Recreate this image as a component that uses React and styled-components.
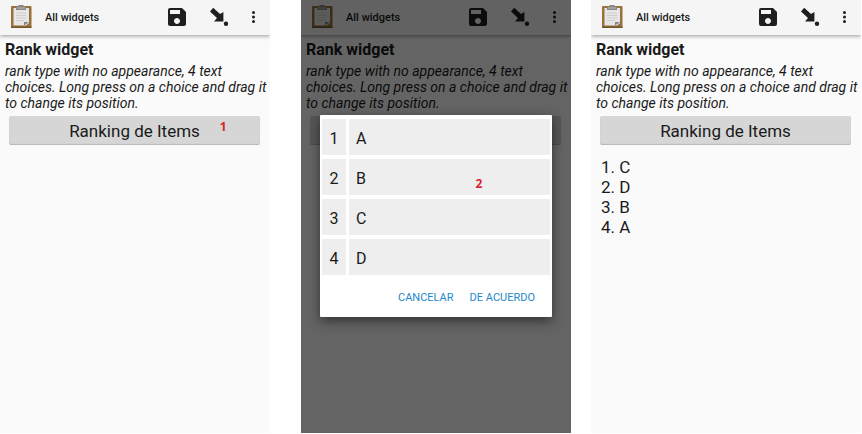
import React from "react";
import styled, { createGlobalStyle } from "styled-components";
import { MdSave } from "react-icons/md";

const GlobalStyle = createGlobalStyle`
  * { box-sizing: border-box; }
  body {
    margin: 0;
    background: #fff;
    color: #1a1a1a;
    font-family: Roboto, "Noto Sans", sans-serif;
  }
`;

const Page = styled.main`
  display: flex;
  min-height: 100vh;
  padding: 0 1px 1px 0;
`;

const Screen = styled.section`
  position: relative;
  flex: 1;
  min-width: 0;
  margin-left: ${({ $gap }) => $gap || 0}px;
  background: #fafafa;
`;

const Toolbar = styled.header`
  display: flex;
  align-items: center;
  height: 35px;
  padding: 0 4px 1px 8px;
  background: #f5f5f5;
  box-shadow: 0 1px 4px rgba(0, 0, 0, 0.4);
  clip-path: inset(0 0 -8px 0);
`;

const AppTitle = styled.h1`
  flex: 1;
  margin: 0 0 0 11px;
  padding-top: 2px;
  font-size: 11px;
  line-height: 16px;
  font-weight: 500;
`;

const IconButton = styled.button`
  display: grid;
  place-items: center;
  width: ${({ $width }) => $width}px;
  height: 34px;
  padding: 0;
  border: 0;
  background: none;
  color: #1f1f1f;
`;

const Content = styled.div`
  padding: 4px 0 4px 5px;
`;

const Question = styled.h2`
  margin: 0;
  font-size: 16px;
  line-height: 22px;
  font-weight: 700;
`;

const Hint = styled.p`
  margin: 2px 0 0;
  font-size: 14px;
  line-height: 16px;
  font-style: italic;
`;

const RankButton = styled.button`
  position: relative;
  display: block;
  width: calc(100% - 14px);
  height: 29px;
  margin: 5px 10px 0 4px;
  padding: 2px 0 0;
  border: 0;
  border-radius: 2px;
  background: #d6d6d6;
  box-shadow: inset 0 -1px 1px rgba(0, 0, 0, 0.15);
  color: #1a1a1a;
  font-family: inherit;
  font-size: 17px;
  line-height: 27px;
`;

const Marker = styled.span`
  position: absolute;
  top: ${({ $top }) => $top};
  left: ${({ $left }) => $left};
  color: #d9262c;
  font-family: "Open Sans", sans-serif;
  font-size: 12px;
  line-height: 16px;
  font-weight: 700;
`;

const Answers = styled.ol`
  margin: 12px 0 0 5px;
  padding: 0;
  list-style: none;
  font-size: 17px;
  line-height: 20px;
`;

const Scrim = styled.div`
  position: absolute;
  inset: 0;
  display: flex;
  align-items: center;
  padding: 0 19px 2px;
  background: rgba(0, 0, 0, 0.6);
`;

const Dialog = styled.div`
  position: relative;
  flex: 1;
  padding: 4px 2px;
  border-radius: 1px;
  background: #fff;
  box-shadow: 0 4px 12px rgba(0, 0, 0, 0.5);
`;

const Choices = styled.ol`
  display: grid;
  gap: 4px;
  margin: 0;
  padding: 0;
  list-style: none;
`;

const Choice = styled.li`
  display: grid;
  grid-template-columns: 24px 1fr;
  gap: 3px;
  font-size: 16px;
  line-height: 32px;
`;

const Rank = styled.span`
  padding-top: 4px;
  background: #eee;
  text-align: center;
`;

const Label = styled.span`
  padding: 4px 0 0 7px;
  background: #eee;
`;

const Actions = styled.div`
  display: flex;
  justify-content: flex-end;
  gap: 16px;
  padding: 7px 15px 0 0;
`;

const ActionButton = styled.button`
  height: 31px;
  padding: 0;
  border: 0;
  background: none;
  color: #1e88c9;
  font-family: inherit;
  font-size: 11px;
  line-height: 31px;
`;

function Clipboard() {
  return (
    <svg width="26" height="26" viewBox="0 0 26 26" aria-hidden="true">
      <rect x="3" y="2" width="20.5" height="22" rx="1" fill="#98713b" />
      <path d="M3 22.5h20.5V24H3z" fill="#77552b" />
      <path d="M5.5 4h15.5v15l-3 2.5H5.5z" fill="#e6e6e6" />
      <path d="M8 9h10M8 11.5h10M8 14h10M8 16.5h8" stroke="#cfcfcf" />
      <path d="M16 21.5V18h5z" fill="#7c8984" />
      <path d="M8 2.8h2.5V1h5v1.8H18V6H8z" fill="#858985" />
      <path d="M9 4h8" stroke="#b9bcb9" />
    </svg>
  );
}

function JumpIcon() {
  return (
    <svg width="24" height="24" viewBox="0 0 24 24" fill="currentColor" aria-hidden="true">
      <path d="M6.2 2.8 13 9 16.4 7V16.4H7L10 13 3 6.6z" />
      <circle cx="19" cy="18.8" r="2.2" />
    </svg>
  );
}

function DotsIcon() {
  return (
    <svg width="24" height="24" viewBox="0 0 24 24" fill="currentColor" aria-hidden="true">
      <circle cx="12.5" cy="7.5" r="1.5" />
      <circle cx="12.5" cy="12" r="1.5" />
      <circle cx="12.5" cy="16.5" r="1.5" />
    </svg>
  );
}

function RankScreen({ gap, marker, answers, children }) {
  return (
    <Screen $gap={gap}>
      <Toolbar>
        <Clipboard />
        <AppTitle>All widgets</AppTitle>
        <IconButton $width={42} aria-label="Save"><MdSave size={24} /></IconButton>
        <IconButton $width={42} aria-label="Go to"><JumpIcon /></IconButton>
        <IconButton $width={26} aria-label="More options"><DotsIcon /></IconButton>
      </Toolbar>
      <Content>
        <Question>Rank widget</Question>
        <Hint>
          rank type with no appearance, 4 text choices. Long press on a choice and drag it to change its position.
        </Hint>
        <RankButton>
          Ranking de Items
          {marker && <Marker $top="3px" $left="84%">{marker}</Marker>}
        </RankButton>
        {answers && (
          <Answers>
            {answers.map((answer, i) => <li key={answer}>{i + 1}. {answer}</li>)}
          </Answers>
        )}
      </Content>
      {children}
    </Screen>
  );
}

export default function App() {
  return (
    <>
      <GlobalStyle />
      <Page>
        <RankScreen marker="1" />
        <RankScreen gap={31}>
          <Scrim>
            <Dialog role="dialog" aria-label="Ranking de Items">
              <Choices>
                {["A", "B", "C", "D"].map((choice, i) => (
                  <Choice key={choice}>
                    <Rank>{i + 1}</Rank>
                    <Label>{choice}</Label>
                  </Choice>
                ))}
              </Choices>
              <Actions>
                <ActionButton>CANCELAR</ActionButton>
                <ActionButton>DE ACUERDO</ActionButton>
              </Actions>
              <Marker $top="61px" $left="67%">2</Marker>
            </Dialog>
          </Scrim>
        </RankScreen>
        <RankScreen gap={20} answers={["C", "D", "B", "A"]} />
      </Page>
    </>
  );
}
